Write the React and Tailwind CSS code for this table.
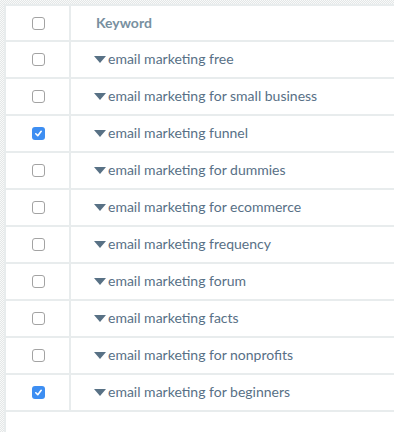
import React from 'react';

const rows = [
    { label: 'email marketing free', checked: false },
    { label: 'email marketing for small business', checked: false },
    { label: 'email marketing funnel', checked: true },
    { label: 'email marketing for dummies', checked: false },
    { label: 'email marketing for ecommerce', checked: false },
    { label: 'email marketing frequency', checked: false },
    { label: 'email marketing forum', checked: false },
    { label: 'email marketing facts', checked: false },
    { label: 'email marketing for nonprofits', checked: false },
    { label: 'email marketing for beginners', checked: true },
];

function Checkbox({ checked }) {
    if (checked) {
        return (
            <span className="flex w-[13px] h-[13px] items-center justify-center rounded-[3px] bg-[#3d8ef2]">
                <svg width="9" height="9" viewBox="0 0 10 10">
                    <path d="M2 5.3 L4.2 7.4 L8 2.6" fill="none" stroke="#fff" strokeWidth="1.8" strokeLinecap="round" strokeLinejoin="round" />
                </svg>
            </span>
        );
    }
    return <span className="block w-[13px] h-[13px] rounded-[3px] border border-[#a3a3a3] bg-white" />;
}

function App() {
    const texture = 'bg-[repeating-conic-gradient(#e4e7e7_0%_25%,#f8f9f9_0%_50%)] bg-[length:2px_2px]';

    return (
        <div className="w-[394px] h-[432px] bg-white flex flex-col overflow-hidden font-['Lato','Liberation_Sans',sans-serif]">
            <div className={`h-[4px] shrink-0 ${texture}`} />
            <div className="flex flex-1">
                <div className={`w-[4px] shrink-0 ${texture}`} />
                <div className="flex-1 border-t-2 border-l-2 border-[#e8eced]">
                    {/* header */}
                    <div className="flex h-[36px] border-b-2 border-[#e8eced]">
                        <div className="w-[65px] shrink-0 border-r-2 border-[#e8eced] flex items-center justify-center pl-[1px]">
                            <Checkbox checked={false} />
                        </div>
                        <div className="flex items-center pl-[25px] pb-[2px] text-[14px] font-bold text-[#7890a0]">
                            Keyword
                        </div>
                    </div>
                    {rows.map(row => (
                        <div key={row.label} className="flex h-[37px] border-b-2 border-[#e8eced]">
                            <div className="w-[65px] shrink-0 border-r-2 border-[#e8eced] flex items-center justify-center pl-[1px]">
                                <Checkbox checked={row.checked} />
                            </div>
                            <div className="flex items-center pl-[23px] pb-[2px] text-[14px] text-[#587086] whitespace-nowrap">
                                <svg width="12" height="7" viewBox="0 0 12 7" className="mr-[2px] mt-[1px]">
                                    <path d="M0 0 H12 L6 7 Z" fill="#587185" />
                                </svg>
                                {row.label}
                            </div>
                        </div>
                    ))}
                </div>
            </div>
        </div>
    );
}

export default App;
